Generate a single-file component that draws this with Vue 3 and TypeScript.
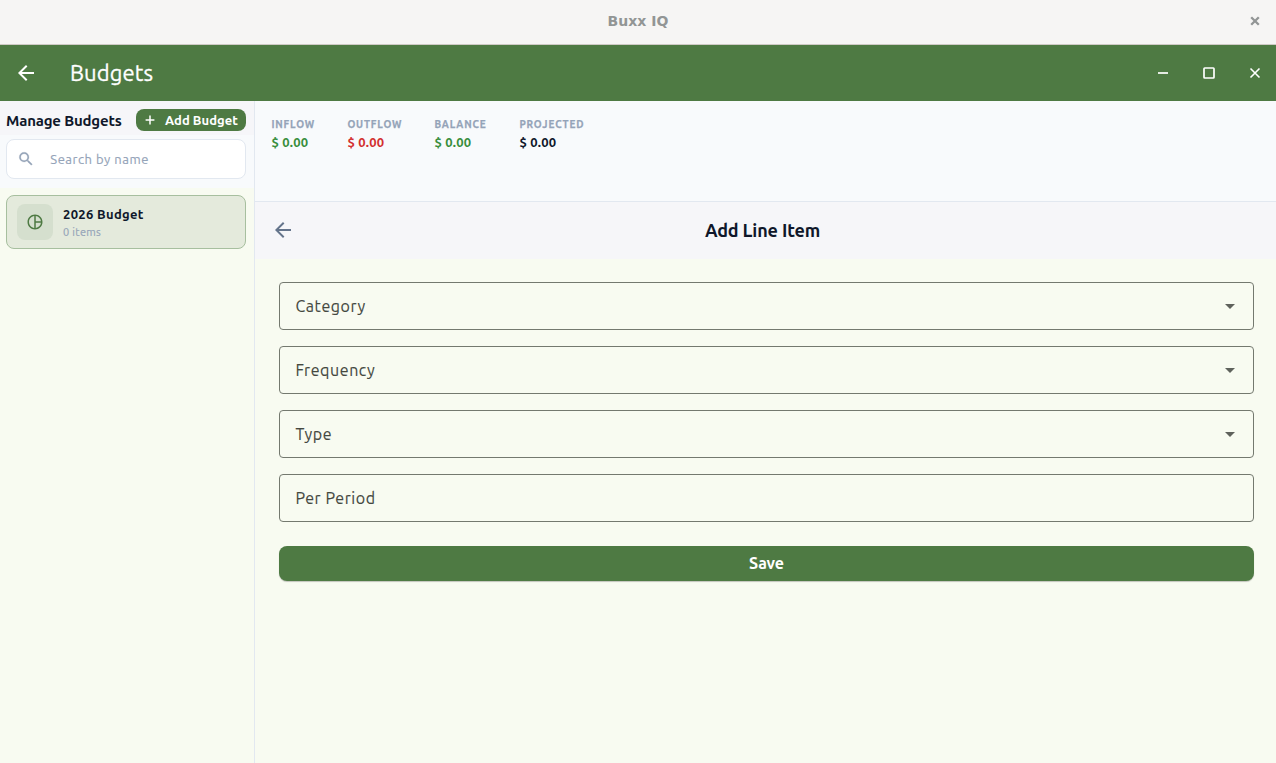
<script setup lang="ts">
interface Stat { label: string; value: string; tone: string; width: number }
interface Field { label: string; select: boolean }

const stats: Stat[] = [
  { label: 'INFLOW', value: '$ 0.00', tone: 'good', width: 76 },
  { label: 'OUTFLOW', value: '$ 0.00', tone: 'bad', width: 87 },
  { label: 'BALANCE', value: '$ 0.00', tone: 'good', width: 85 },
  { label: 'PROJECTED', value: '$ 0.00', tone: 'plain', width: 90 },
]
const fields: Field[] = [
  { label: 'Category', select: true },
  { label: 'Frequency', select: true },
  { label: 'Type', select: true },
  { label: 'Per Period', select: false },
]
</script>

<template>
  <div class="window">
    <header class="titlebar">
      <span class="side"></span>
      <span class="app-name">Buxx IQ</span>
      <span class="side">
        <svg width="10" height="10" viewBox="0 0 10 10"><path d="M1.200 1.200l7.600 7.600M8.800 1.200l-7.600 7.600" stroke="#929595" stroke-width="2.300" /></svg>
      </span>
    </header>

    <div class="appbar">
      <svg class="back" width="24" height="24" viewBox="0 0 24 24" fill="#fff"><path d="M20 11H7.830l5.590-5.590L12 4l-8 8 8 8 1.410-1.410L7.830 13H20v-2z" /></svg>
      <h1>Budgets</h1>
      <div class="controls">
        <svg width="46" height="56" viewBox="0 0 46 56"><path d="M18 28h10" stroke="#fff" stroke-width="1.700" /></svg>
        <svg width="46" height="56" viewBox="0 0 46 56"><rect x="18" y="23" width="10" height="10" rx=".7" fill="none" stroke="#fff" stroke-width="1.700" /></svg>
        <svg width="46" height="56" viewBox="0 0 46 56"><path d="M18.500 23.500l9 9M27.500 23.500l-9 9" stroke="#fff" stroke-width="1.600" /></svg>
      </div>
    </div>

    <div class="body">
      <aside class="sidebar">
        <div class="manage">
          <h2>Manage Budgets</h2>
          <button class="add">
            <svg width="10" height="10" viewBox="0 0 10 10"><path d="M5 .6v8.800M.6 5h8.800" stroke="#fff" stroke-width="1.500" /></svg>
            <span>Add Budget</span>
          </button>
        </div>
        <div class="search-wrap">
          <div class="search">
            <svg width="18" height="18" viewBox="0 0 24 24" fill="#94a3b8" stroke="#94a3b8" stroke-width=".3"><path d="M15.500 14h-.79l-.28-.27A6.471 6.471 0 0 0 16 9.500 6.500 6.500 0 1 0 9.500 16c1.610 0 3.090-.59 4.230-1.570l.27.280v.79l5 4.990L20.490 19l-4.990-5zm-6 0C7.010 14 5 11.990 5 9.500S7.010 5 9.500 5 14 7.010 14 9.500 11.990 14 9.500 14z" /></svg>
            <span>Search by name</span>
          </div>
        </div>
        <div class="card">
          <div class="tile">
            <svg width="18" height="18" viewBox="0 0 24 24" fill="#4e7a43"><path d="M12 2C6.480 2 2 6.480 2 12s4.480 10 10 10 10-4.480 10-10S17.520 2 12 2zm1 2.070c3.610.45 6.480 3.330 6.930 6.930H13V4.070zM4 12c0-4.060 3.070-7.440 7-7.930v15.870c-3.930-.5-7-3.880-7-7.940zm9 7.930V13h6.930c-.45 3.610-3.320 6.480-6.930 6.930z" /></svg>
          </div>
          <div class="card-text">
            <strong>2026 Budget</strong>
            <small>0 items</small>
          </div>
        </div>
      </aside>

      <main class="content">
        <section class="summary">
          <div v-for="s in stats" :key="s.label" class="stat" :style="{ width: s.width + 'px' }">
            <span class="stat-label">{{ s.label }}</span>
            <span class="stat-value" :class="s.tone">{{ s.value }}</span>
          </div>
        </section>
        <div class="form-head">
          <svg width="24" height="24" viewBox="0 0 24 24" fill="#64748b"><path d="M20 11H7.830l5.590-5.590L12 4l-8 8 8 8 1.410-1.410L7.830 13H20v-2z" /></svg>
          <h3>Add Line Item</h3>
        </div>
        <form class="form" @submit.prevent>
          <div v-for="f in fields" :key="f.label" class="field">
            <span>{{ f.label }}</span>
            <svg v-if="f.select" width="10" height="5" viewBox="0 0 10 5"><path d="M0 0l5 5 5-5z" fill="#5f625c" /></svg>
          </div>
          <button class="save"><span>Save</span></button>
        </form>
      </main>
    </div>
  </div>
</template>

<style>
body { margin: 0; overflow: hidden; }
</style>

<style scoped>
* { box-sizing: border-box; }
h1, h2, h3 { margin: 0; }
.window { width: 1276px; height: 763px; display: flex; flex-direction: column; background: #f8fbf1; font-family: Ubuntu, "Noto Sans", sans-serif; color: #0f172a; overflow: hidden; white-space: nowrap; }
button { font-family: inherit; border: 0; color: #fff; background: #4e7a43; white-space: nowrap; }
svg { display: block; flex: none; }

.titlebar { height: 45px; flex: none; display: flex; align-items: center; justify-content: space-between; padding: 0 16px 3px 15px; background: #f6f5f4; border-bottom: 1px solid #cfcac5; }
.side { width: 10px; }
.app-name { font: bold 14px/20px "DejaVu Sans", sans-serif; letter-spacing: .05px; padding-left: 1px; color: #929595; }

.appbar { height: 56px; flex: none; display: flex; align-items: center; padding-left: 14px; background: #4e7a43; color: #fff; }
.appbar h1 { margin-left: 32px; font-size: 22px; font-weight: 400; line-height: 28px; letter-spacing: .1px; -webkit-text-stroke: .3px #fff; }
.controls { margin-left: auto; display: flex; margin-right: -2px; }

.body { flex: 1; display: flex; min-height: 0; }
.sidebar { width: 255px; flex: none; border-right: 1px solid #e2e8f0; }
.manage { height: 34px; display: flex; align-items: center; justify-content: space-between; padding: 4px 8px 0 6px; background: #f6f6f9; }
.manage h2 { font-size: 15px; font-weight: 600; line-height: 20px; letter-spacing: -.18px; padding-top: 1px; }
.add { width: 110.500px; height: 22px; border-radius: 8px; display: flex; align-items: center; gap: 10px; padding: 0 0 0 9.500px; font-size: 13px; font-weight: 600; letter-spacing: .04px; }
.search-wrap { height: 53px; padding: 4px 8px 0 6px; background: #f8fafc; }
.search { height: 40px; border: 1px solid #e2e8f0; border-radius: 8px; background: #fff; display: flex; align-items: center; gap: 15.300px; padding-left: 10px; color: #94a3b8; font-size: 13px; letter-spacing: .52px; -webkit-text-stroke: .15px #94a3b8; }
.card { height: 54px; margin: 7px 8px 0 6px; border: 1px solid #a7bf9f; border-radius: 8px; background: #e4eadc; display: flex; align-items: center; gap: 10px; padding-left: 10px; }
.tile { width: 36px; height: 36px; border-radius: 8px; background: #d5dfce; display: grid; place-items: center; }
.card-text { display: flex; flex-direction: column; }
.card-text strong { font-size: 13px; font-weight: 600; line-height: 18px; letter-spacing: .33px; }
.card-text small { font-size: 11px; line-height: 17px; letter-spacing: .3px; padding-top: 1px; margin-bottom: -1px; color: #94a3b8; -webkit-text-stroke: .15px #94a3b8; }

.content { flex: 1; min-width: 0; }
.summary { height: 101px; display: flex; padding: 15px 16px 0 16.400px; background: #f8fafc; border-bottom: 1px solid #e2e8f0; }
.stat { display: flex; flex-direction: column; }
.stat-label { font-size: 10px; font-weight: 700; line-height: 17px; letter-spacing: .85px; color: #94a3b8; -webkit-text-stroke: .25px #94a3b8; }
.stat-value { font-size: 13px; font-weight: 700; line-height: 19px; letter-spacing: .22px; }
.good { color: #388e3c; }
.bad { color: #d32f2f; }
.plain { color: #0f172a; }
.form-head { height: 57px; display: grid; grid-template-columns: 40px 1fr 40px; align-items: center; padding: 0 22px 2px 16px; background: #f6f6f9; }
.form-head h3 { text-align: center; font-size: 18px; font-weight: 600; line-height: 24px; letter-spacing: -.15px; }
.form { padding: 23px 22px 0 24px; display: flex; flex-direction: column; gap: 16px; }
.field { height: 48px; border: 1px solid #74796f; border-radius: 4px; display: flex; align-items: center; justify-content: space-between; padding: 0 18px 0 15.400px; font-size: 16px; letter-spacing: .57px; color: #44483f; -webkit-text-stroke: .12px #44483f; }
.save { height: 35px; margin-top: 8px; border-radius: 8px; padding: 0 0 2px; font-size: 16px; font-weight: 600; letter-spacing: -.1px; box-shadow: 0 1px 1px rgba(0, 0, 0, .22); }
</style>
